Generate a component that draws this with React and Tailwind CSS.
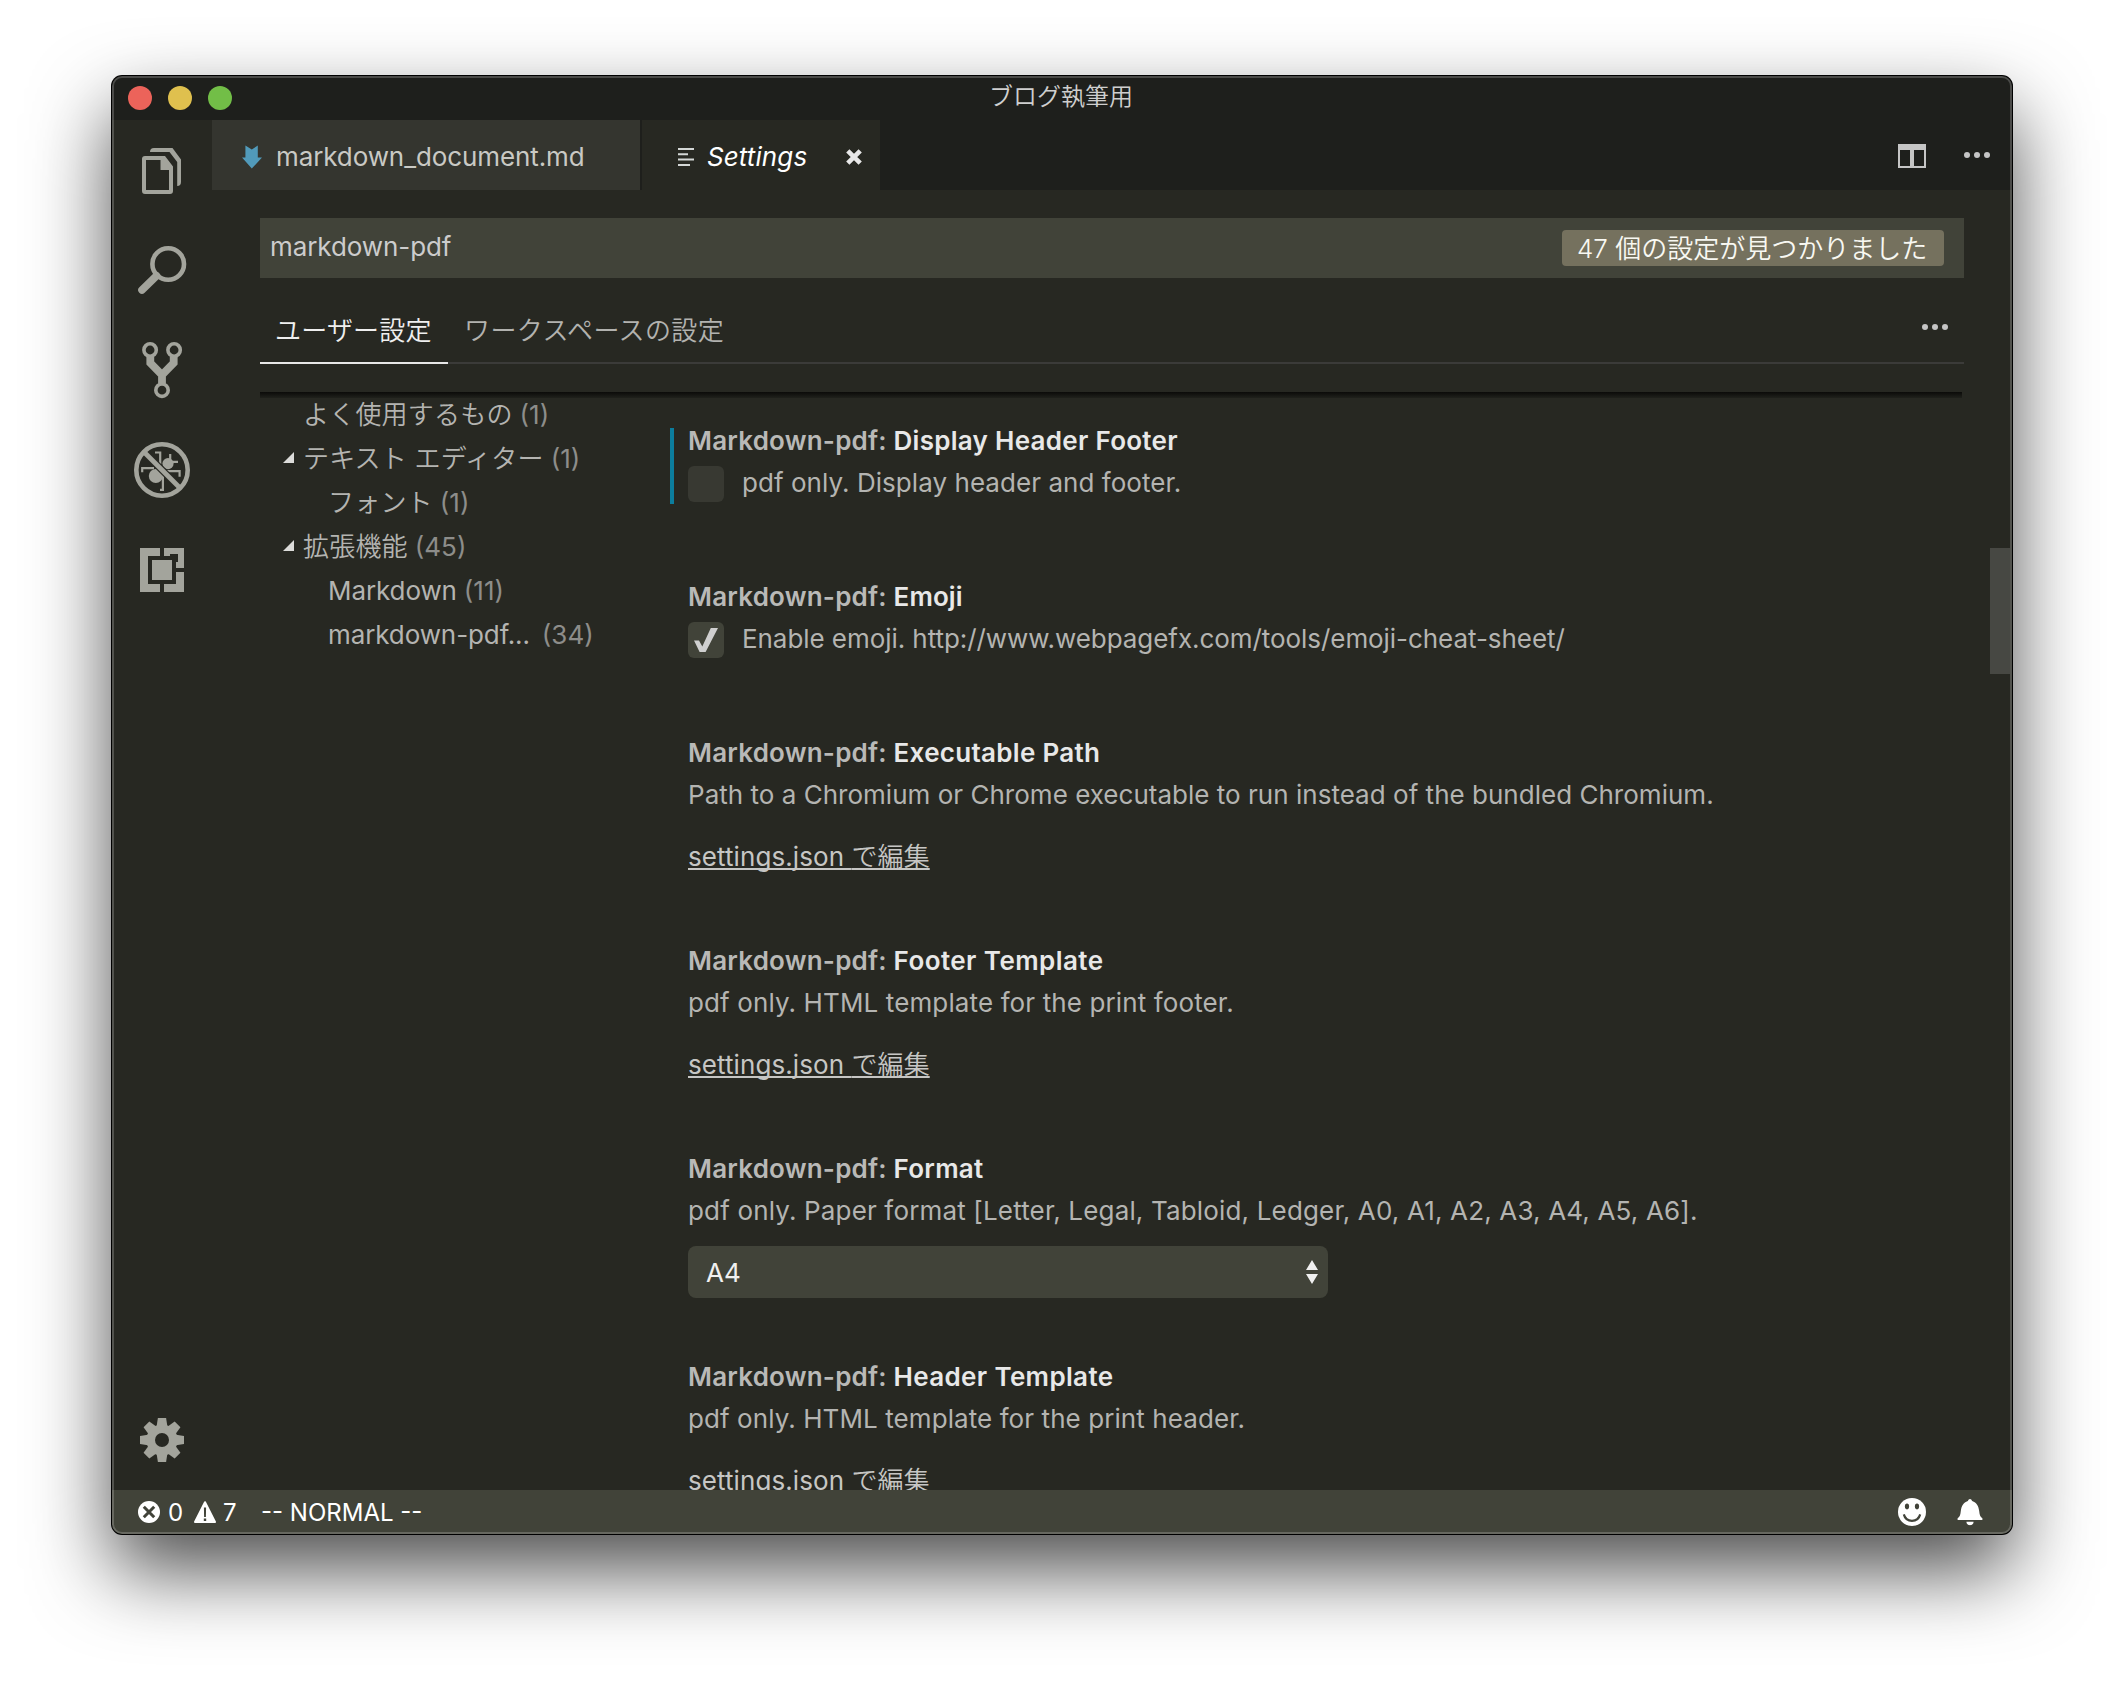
const Jp = ({ children }) => <span className="font-[350]">{children}</span>;

/* ---------- activity bar icons, each drawn in a 100×100 cell ---------- */

const FilesIcon = () => (
  <svg className="size-[100px]" viewBox="0 0 100 100" fill="#a3a49c">
    <path d="M38 32Q38 28 42 28H60.5L69 39.5V62Q69 66 65.2 66V42L57.5 32Z" />
    <path
      fillRule="evenodd"
      d="M33 36H53L61 46.5V71Q61 74 58 74H33Q30 74 30 71V39Q30 36 33 36ZM34 40V70H57V50H48.5V40Z"
    />
  </svg>
);

const SearchIcon = () => (
  <svg className="size-[100px]" viewBox="0 0 100 100" fill="none" stroke="#a3a49c">
    <circle cx="56.2" cy="44" r="15.8" strokeWidth="4.6" />
    <path d="M44.6 55.8L30 70" strokeWidth="7.6" strokeLinecap="round" />
  </svg>
);

const GitIcon = () => (
  <svg className="size-[100px]" viewBox="0 0 100 100" fill="none" stroke="#a3a49c">
    <g strokeWidth="3.6">
      <circle cx="38.1" cy="30" r="6.2" />
      <circle cx="62.1" cy="30" r="6.2" />
      <circle cx="50" cy="70.2" r="6.2" />
    </g>
    <path d="M38.3 37V43L50 55L61.7 43V37M50 54V63.5" strokeWidth="7.8" />
  </svg>
);

const DebugIcon = () => (
  <svg className="size-[100px]" viewBox="0 0 100 100" fill="none">
    <circle cx="56" cy="43.6" r="5.6" fill="#a3a49c" />
    <circle cx="43.8" cy="56" r="7" fill="#a3a49c" />
    <g stroke="#a3a49c" strokeWidth="2.2">
      <path d="M43 32.5H48.2V44M58.2 34V41.8H66M54 51.2H67.6V56.7M42 48.2H30.2V52.2M50.9 54V69.9H48" />
    </g>
    <path d="M32 32L68 68" stroke="#272822" strokeWidth="7.4" />
    <path d="M32 32L68 68" stroke="#a3a49c" strokeWidth="4.8" />
    <circle cx="50" cy="50" r="25.7" stroke="#a3a49c" strokeWidth="4.6" />
  </svg>
);

const ExtensionsIcon = () => (
  <svg className="size-[100px]" viewBox="0 0 100 100">
    <rect x="28" y="28" width="44" height="44" fill="#a3a49c" />
    <path d="M36 36H58V34H66V42H64V48H72V52H64V64H52V72H48V64H36ZM48 28H52V36H48Z" fill="#272822" />
    <rect x="40" y="40" width="20" height="20" fill="#a3a49c" />
  </svg>
);

const GearIcon = () => (
  <svg className="size-[100px]" viewBox="0 0 100 100">
    <g fill="#a3a49c">
      <circle cx="50" cy="50" r="15.6" />
      {[0, 45, 90, 135, 180, 225, 270, 315].map((a) => (
        <path key={a} d="M45.9 28H54.1L55.8 39H44.2Z" transform={`rotate(${a} 50 50)`} />
      ))}
    </g>
    <circle cx="50" cy="50" r="7" fill="#272822" />
  </svg>
);

/* ---------- small icons ---------- */

const MarkdownIcon = () => (
  <svg className="h-6 w-5" viewBox="0 0 20 24" fill="#519aba">
    <path d="M3.4 .5L9.8 4.5L15.8 .5V12.5H20L9.8 23.5L0 12.5H3.4Z" />
  </svg>
);

const LinesIcon = () => (
  <svg className="h-[18px] w-4" viewBox="0 0 16 18" fill="#d4d7d6">
    <path d="M0 0H16V2H0ZM0 5.3H10V7.3H0ZM0 10.6H16V12.6H0ZM0 16H12V18H0Z" />
  </svg>
);

const CloseIcon = () => (
  <svg className="size-4" viewBox="0 0 16 16" stroke="#e8e8e8" strokeWidth="4.6">
    <path d="M1.8 1.8L14.2 14.2M14.2 1.8L1.8 14.2" />
  </svg>
);

const SplitIcon = () => (
  <svg className="h-6 w-7" viewBox="0 0 28 24" fill="#c5c5c5">
    <path fillRule="evenodd" d="M0 0H28V24H0ZM2 6V22H12V6ZM16 6V22H26V6Z" />
  </svg>
);

const MoreIcon = () => (
  <svg className="h-[6px] w-[26px]" viewBox="0 0 26 6" fill="#c5c5c5">
    <circle cx="3" cy="3" r="3" />
    <circle cx="13" cy="3" r="3" />
    <circle cx="23" cy="3" r="3" />
  </svg>
);

const CheckIcon = () => (
  <svg className="size-6" viewBox="0 0 24 24" fill="#cfcfcf">
    <path d="M0 12.6H5L8.3 18.6L16.8 0H24L11.6 24H5.6Z" />
  </svg>
);

const ErrorIcon = () => (
  <svg className="size-[22px]" viewBox="0 0 22 22">
    <circle cx="11" cy="11" r="11" fill="#fff" />
    <path d="M5.8 5.8L16.2 16.2M16.2 5.8L5.8 16.2" stroke="#414339" strokeWidth="3" />
  </svg>
);

const WarningIcon = () => (
  <svg className="size-[22px]" viewBox="0 0 22 22">
    <path d="M11 1.2L21 21H1Z" fill="#fff" stroke="#fff" strokeWidth="2" strokeLinejoin="round" />
    <path d="M9.9 6.5H12.1L11.9 16H10.1ZM9.8 17.6H12.2V20H9.8Z" fill="#414339" />
  </svg>
);

const SmileyIcon = () => (
  <svg className="size-7" viewBox="0 0 28 28">
    <circle cx="14" cy="14" r="14" fill="#fff" />
    <ellipse cx="9" cy="8.4" rx="2.1" ry="2.8" fill="#414339" />
    <ellipse cx="19" cy="8.4" rx="2.1" ry="2.8" fill="#414339" />
    <path d="M5.8 16.4C8.2 25 19.8 25 22.2 16.4" fill="none" stroke="#414339" strokeWidth="2.2" />
  </svg>
);

const BellIcon = () => (
  <svg className="h-[27px] w-[26px]" viewBox="0 0 26 27" fill="#fff">
    <path d="M13 0C14 0 14.6 .8 15.2 2C19.6 3.4 21.6 7 22.2 12C22.6 15.6 23 17.8 25.4 19.2V21H.6V19.2C3 17.8 3.4 15.6 3.8 12C4.4 7 6.4 3.4 10.8 2C11.4 .8 12 0 13 0ZM9.4 22.8H16.6C16.6 25 15 26.2 13 26.2C11 26.2 9.4 25 9.4 22.8Z" />
  </svg>
);

/* ---------- settings table of contents ---------- */

const TocRow = ({ label, count, level, open, jp, gap }) => (
  <div
    className={
      'flex h-11 items-center leading-[43px] whitespace-pre ' +
      (level === 2 ? 'pl-[68px]' : open ? 'pl-[23px]' : 'pl-[43px]')
    }
  >
    {open && (
      <svg className="mt-[-2px] mr-[9px] size-[11px] shrink-0" viewBox="0 0 11 11" fill="#dcdcda">
        <path d="M11 0V11H0Z" />
      </svg>
    )}
    <span className={'text-[#b4b4b1] ' + (jp ? 'font-[350] tracking-[0.2px]' : 'tracking-[-0.1px]')}>{label}</span>
    <span className={'text-[#8d8d8a] ' + (gap ? 'ml-[12px]' : 'ml-[7px]')}>({count})</span>
  </div>
);

/* ---------- one setting ---------- */

const Setting = ({ name, nameClass = 'tracking-[0.25px]', modified, tall, children }) => (
  <div className={'flex ' + (tall ? 'h-[208px]' : 'h-[156px]')}>
    <div className={'mt-2 h-[76px] w-1 ' + (modified ? 'bg-[#0c7d9d]' : '')} />
    <div className="flex-1 pl-3.5 leading-[41px]">
      <h3 className="h-[42px] font-semibold tracking-[0.2px] whitespace-pre text-[#b9b9b7]">
        Markdown-pdf: <span className={'text-[#e8e8e8] ' + nameClass}>{name}</span>
      </h3>
      {children}
    </div>
  </div>
);

const Desc = ({ className = '', children }) => (
  <p className={'h-[42px] whitespace-nowrap text-[#b4b4b1] ' + className}>{children}</p>
);

const CheckSetting = ({ checked, className, children }) => (
  <div className="flex h-[42px]">
    <div
      className={
        'mt-1 mr-[18px] flex size-9 items-center justify-center rounded-[6px] ' +
        (checked ? 'bg-[#414339]' : 'bg-[#383932]')
      }
    >
      {checked && <CheckIcon />}
    </div>
    <Desc className={className}>{children}</Desc>
  </div>
);

const EditLink = () => (
  <a className="mt-5 block h-[42px] tracking-[0.08px] text-[#c6c6c4] underline decoration-2 underline-offset-[2px] [text-decoration-skip-ink:none]">
    settings.json <Jp>で編集</Jp>
  </a>
);

export default function App() {
  return (
    <div className="h-[1682px] w-[2124px] overflow-hidden bg-white px-28 pt-[76px] font-['Inter','Noto_Sans_CJK_JP',sans-serif] text-[26px]">
      <div className="relative flex h-[1458px] w-[1900px] flex-col overflow-hidden rounded-[10px] bg-[#272822] shadow-[0_0_0_1px_#000,0_36px_80px_rgba(0,0,0,0.7)]">
        {/* title bar */}
        <div className="grid h-11 shrink-0 grid-cols-3 items-center bg-[#1e1f1c]">
          <div className="flex gap-4 pl-4">
            <i className="size-6 rounded-full bg-[#ec635a]" />
            <i className="size-6 rounded-full bg-[#dfc04e]" />
            <i className="size-6 rounded-full bg-[#72be47]" />
          </div>
          <div className="pr-[2px] pb-0.5 text-center text-[24px] leading-10 font-[350] text-[#cfcfcf]">
            ブログ執筆用
          </div>
        </div>

        <div className="flex min-h-0 flex-1">
          {/* activity bar */}
          <div className="flex w-[100px] shrink-0 flex-col">
            <FilesIcon />
            <SearchIcon />
            <GitIcon />
            <DebugIcon />
            <ExtensionsIcon />
            <div className="mt-auto">
              <GearIcon />
            </div>
          </div>

          <div className="flex min-w-0 flex-1 flex-col">
            {/* editor tabs */}
            <div className="flex h-[70px] shrink-0 bg-[#1e1f1c] leading-[39px]">
              <div className="mr-0.5 flex w-[428px] items-center bg-[#34352f] pt-[3px] pl-[30px] text-[#c9c9c4]">
                <MarkdownIcon />
                <span className="ml-3.5 tracking-[-0.1px]">markdown_document.md</span>
              </div>
              <div className="flex w-[238px] items-center bg-[#272822] pt-[3px] pl-9 text-white italic">
                <LinesIcon />
                <span className="ml-[13px] w-[139px] tracking-[0.1px]">Settings</span>
                <CloseIcon />
              </div>
              <div className="ml-auto flex items-center gap-[38px] pr-[22px]">
                <div className="pt-0.5">
                  <SplitIcon />
                </div>
                <MoreIcon />
              </div>
            </div>

            {/* settings header */}
            <div className="mr-[48px] ml-12 shrink-0 pt-7">
              <div className="flex h-[60px] items-center justify-between bg-[#414339] pr-5 pl-[10px] text-[#cccccc]">
                <span className="pb-[3px] tracking-[-0.08px]">markdown-pdf</span>
                <span className="h-9 w-[382px] rounded-[4px] bg-[#75715e] pl-[15px] leading-[37px] font-[350] whitespace-nowrap text-[#f8f8f2]">
                  47 個の設定が見つかりました
                </span>
              </div>
              <div className="mt-[34px] flex h-[52px] border-b-2 border-[#3b3b39] leading-[38px] font-[350]">
                <div className="mb-[-2px] w-[188px] border-b-2 border-[#e7e7e7] pl-[15px] tracking-[0.2px] text-[#efefef]">
                  ユーザー設定
                </div>
                <div className="pl-4 tracking-[0.4px] text-[#b2b2af]">ワークスペースの設定</div>
                <div className="mt-3 mr-4 ml-auto flex h-[6px]">
                  <MoreIcon />
                </div>
              </div>
              <div className="mt-7 mr-0.5 h-[6px] bg-linear-to-b from-[#0b0b09] to-[#20211c]" />
            </div>

            {/* settings body */}
            <div className="flex min-h-0 flex-1 overflow-hidden">
              <div className="ml-12 w-[410px] shrink-0">
                <div className="mt-[-6px]">
                  <TocRow label="よく使用するもの" count={1} jp />
                  <TocRow label="テキスト エディター" count={1} open jp />
                  <TocRow label="フォント" count={1} level={2} jp />
                  <TocRow label="拡張機能" count={45} open jp />
                  <TocRow label="Markdown" count={11} level={2} />
                  <TocRow label="markdown-pdf..." count={34} level={2} gap />
                </div>
              </div>
              <div className="flex-1 pt-[22px]">
                <Setting name="Display Header Footer" nameClass="tracking-[0.28px]" modified>
                  <CheckSetting className="tracking-[0.05px]">pdf only. Display header and footer.</CheckSetting>
                </Setting>
                <Setting name="Emoji" nameClass="tracking-[0.1px]">
                  <CheckSetting className="tracking-[-0.06px]" checked>
                    Enable emoji. http://www.webpagefx.com/tools/emoji-cheat-sheet/
                  </CheckSetting>
                </Setting>
                <Setting name="Executable Path" nameClass="tracking-[0.3px]" tall>
                  <Desc className="tracking-[0.02px]">
                    Path to a Chromium or Chrome executable to run instead of the bundled Chromium.
                  </Desc>
                  <EditLink />
                </Setting>
                <Setting name="Footer Template" nameClass="tracking-[0.43px]" tall>
                  <Desc className="tracking-[0.12px]">pdf only. HTML template for the print footer.</Desc>
                  <EditLink />
                </Setting>
                <Setting name="Format" tall>
                  <Desc className="tracking-[0.16px]">
                    pdf only. Paper format [Letter, Legal, Tabloid, Ledger, A0, A1, A2, A3, A4, A5, A6].
                  </Desc>
                  <div className="mt-3.5 flex h-[52px] w-[640px] items-center justify-between rounded-[8px] bg-[#414339] pr-[10px] pl-[18px] text-[#f0f0f0]">
                    <span className="pt-px">A4</span>
                    <svg className="h-6 w-3" viewBox="0 0 12 24" fill="#f0f0f0">
                      <path d="M6 0L12 10H0ZM0 14H12L6 24Z" />
                    </svg>
                  </div>
                </Setting>
                <Setting name="Header Template" nameClass="tracking-[0.35px]" tall>
                  <Desc className="tracking-[0.08px]">pdf only. HTML template for the print header.</Desc>
                  <EditLink />
                </Setting>
              </div>
              <div className="w-[22px] shrink-0 pt-[150px] pr-0.5">
                <div className="h-[126px] bg-[#474843]" />
              </div>
            </div>
          </div>
        </div>

        {/* status bar */}
        <div className="flex h-11 shrink-0 items-center bg-[#414339] pl-[26px] text-[24px] leading-[43px] text-white">
          <ErrorIcon />
          <span className="ml-[8px] w-[26px]">0</span>
          <WarningIcon />
          <span className="ml-[7px] w-[38px]">7</span>
          <span>-- NORMAL --</span>
          <div className="ml-auto flex items-center gap-[31px] pr-[29px]">
            <SmileyIcon />
            <BellIcon />
          </div>
        </div>

        {/* window edge highlight */}
        <div className="pointer-events-none absolute inset-0 rounded-[10px] shadow-[inset_0_0_0_2px_rgba(255,255,255,0.2)]" />
      </div>
    </div>
  );
}
